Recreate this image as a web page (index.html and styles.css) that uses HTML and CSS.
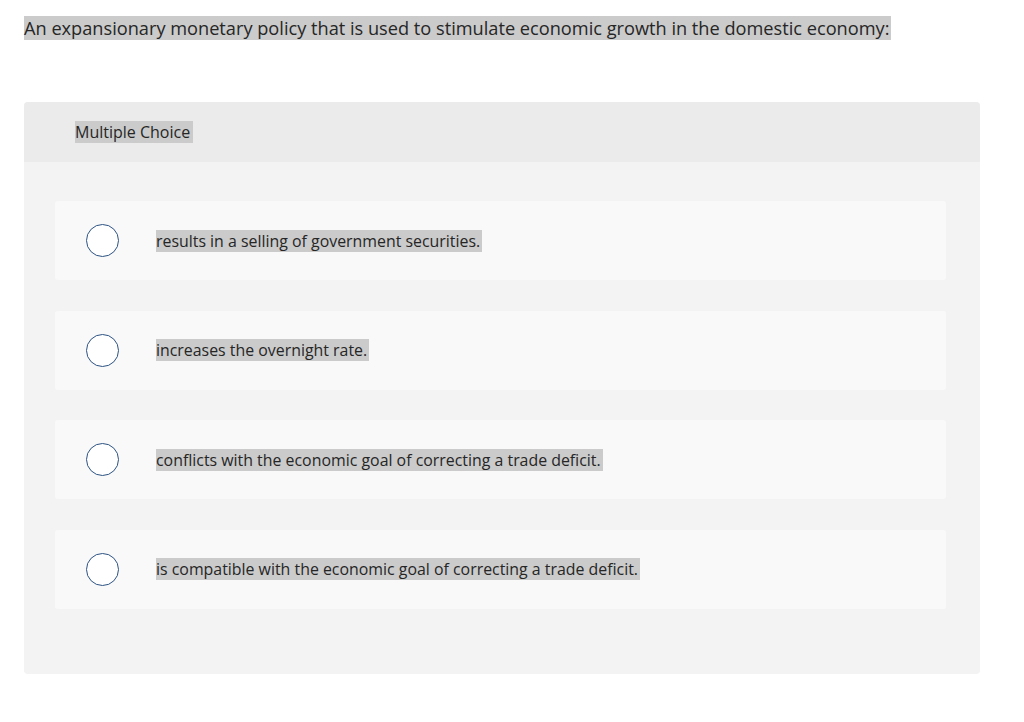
FILE: index.html
```html
<!DOCTYPE html>
<html lang="en">
<head>
    <meta charset="UTF-8">
    <meta name="viewport" content="width=device-width, initial-scale=1.0">
    <title>Multiple Choice</title>
    <link rel="stylesheet" href="styles.css">
</head>
<body>
    <div class="question">
        <p class="prompt"><span class="hl">An expansionary monetary policy that is used to stimulate economic growth in the domestic economy:</span></p>
    </div>
    <div class="choice-card">
        <div class="choice-header">
            <span class="hl">Multiple Choice</span>
        </div>
        <div class="choice-list">
            <label class="choice">
                <span class="radio"></span>
                <span class="choice-text hl">results in a selling of government securities.</span>
            </label>
            <label class="choice">
                <span class="radio"></span>
                <span class="choice-text hl">increases the overnight rate.</span>
            </label>
            <label class="choice">
                <span class="radio"></span>
                <span class="choice-text hl">conflicts with the economic goal of correcting a trade deficit.</span>
            </label>
            <label class="choice">
                <span class="radio"></span>
                <span class="choice-text hl">is compatible with the economic goal of correcting a trade deficit.</span>
            </label>
        </div>
    </div>
</body>
</html>
```

FILE: styles.css
```css
body {
    font-family: "Open Sans", Arial, sans-serif;
    color: #262626;
    background-color: #fff;
    margin: 0;
    padding: 16px 44px 0 24px;
}
.hl {
    background-color: #cbcbcb;
}
.question {
    margin-bottom: 61px;
}
.prompt {
    margin: 0;
    font-size: 18.2px;
    line-height: 25px;
}
.prompt .hl {
    padding-right: 2px;
}
.choice-card {
    background-color: #f3f3f3;
    border-radius: 4px;
    overflow: hidden;
}
.choice-header {
    background-color: #ebebeb;
    height: 60px;
    padding: 0 51px;
    display: flex;
    align-items: center;
    font-size: 16px;
}
.choice-header .hl {
    padding: 0 3px 0 0;
}
.choice-list {
    display: flex;
    flex-direction: column;
    gap: 30.5px;
    padding: 39px 34px 65.5px 31px;
}
.choice {
    display: flex;
    align-items: center;
    height: 79px;
    background-color: #f9f9f9;
    border-radius: 3px;
    font-size: 15.9px;
}
.radio {
    width: 31px;
    height: 31px;
    border: 1.5px solid #2c5282;
    border-radius: 50%;
    background-color: #fff;
    margin: 0 37px 0 31px;
    flex-shrink: 0;
}
.choice-text {
    padding: 0 2px 0 0;
}
```
